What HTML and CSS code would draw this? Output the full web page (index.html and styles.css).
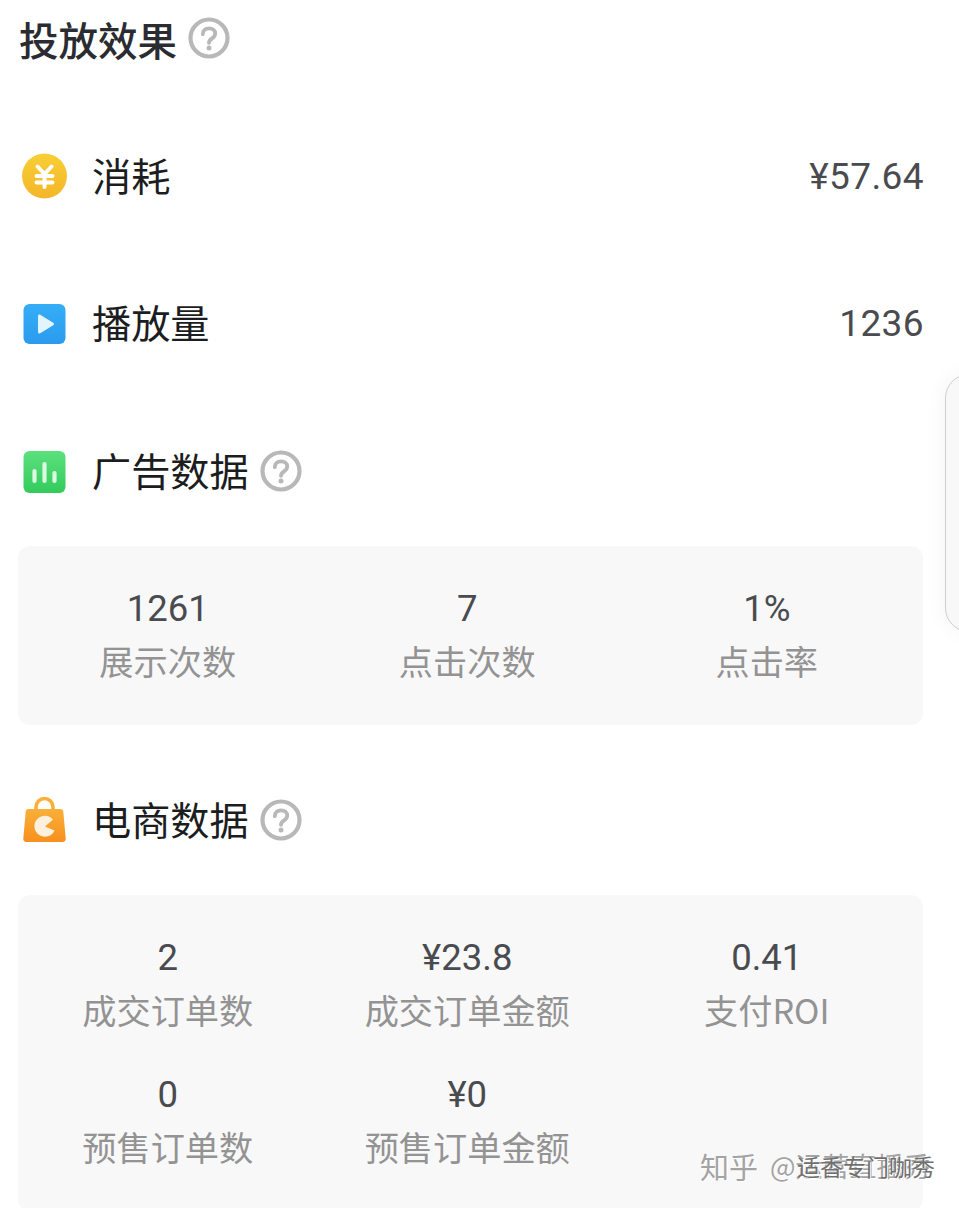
FILE: index.html
```html
<!DOCTYPE html>
<html lang="zh">
<head>
  <meta charset="utf-8">
  <title>投放效果</title>
  <link rel="stylesheet" href="styles.css">
</head>
<body>
  <svg class="defs" width="0" height="0">
    <defs>
      <linearGradient id="gradCoin" x1="0" y1="0" x2="0" y2="1"><stop offset="0" stop-color="#f7cf35"/><stop offset="1" stop-color="#f5b52a"/></linearGradient>
      <linearGradient id="gradPlay" x1="0" y1="0" x2="0" y2="1"><stop offset="0" stop-color="#35aef6"/><stop offset="1" stop-color="#2b9bee"/></linearGradient>
      <linearGradient id="gradBars" x1="0" y1="0" x2="0" y2="1"><stop offset="0" stop-color="#5ce07d"/><stop offset="1" stop-color="#33cb5c"/></linearGradient>
      <linearGradient id="gradBag" x1="0" y1="0" x2="0" y2="1"><stop offset="0" stop-color="#f9b03a"/><stop offset="1" stop-color="#f78f1e"/></linearGradient>
      <symbol id="help" viewBox="0 0 42 42">
        <circle cx="21" cy="21" r="18.500" fill="none" stroke="#b8b8b8" stroke-width="4.200"/>
        <path d="M14.800 17.200c0-3.600 2.700-5.800 6.200-5.800s6.200 2.100 6.200 5.200c0 2.400-1.400 3.600-3.100 4.800-1.900 1.300-3.100 2.200-3.100 4.400" fill="none" stroke="#b8b8b8" stroke-width="3.800" stroke-linecap="round"/>
        <circle cx="21" cy="31" r="2.500" fill="#b8b8b8"/>
      </symbol>
    </defs>
  </svg>

  <div class="page">
    <h1 class="title">投放效果 <svg class="help"><use href="#help"/></svg></h1>

    <div class="row row-first">
      <svg class="icon" viewBox="0 0 46 46">
        <circle cx="23.500" cy="23" r="22.500" fill="url(#gradCoin)"/>
        <path d="M16.500 13.500 23.500 21l7-7.500M15.500 23h16M15.500 29.500h16M23.500 21v13" fill="none" stroke="#fff" stroke-width="4" stroke-linecap="round" stroke-linejoin="round"/>
      </svg>
      <span class="row-name">消耗</span>
      <span class="row-value">¥57.64</span>
    </div>

    <div class="row">
      <svg class="icon icon-square" viewBox="0 0 46 46">
        <rect x="1.500" y="2" width="42" height="40" rx="6" fill="url(#gradPlay)"/>
        <path d="M16 14c0-1.200 1.200-1.900 2.200-1.300l13 8c1 .6 1 2 0 2.600l-13 8c-1 .6-2.200-.1-2.200-1.300z" fill="#e3f4fd"/>
      </svg>
      <span class="row-name">播放量</span>
      <span class="row-value">1236</span>
    </div>

    <div class="row">
      <svg class="icon icon-square" viewBox="0 0 46 46">
        <rect x="1.500" y="1" width="42" height="42" rx="6" fill="url(#gradBars)"/>
        <g fill="none" stroke="#dcf8e3" stroke-width="4.200" stroke-linecap="round">
          <path d="M12.500 21v10"/><path d="M22.500 14v17"/><path d="M32.500 23v8"/>
        </g>
      </svg>
      <span class="row-name">广告数据</span>
      <svg class="help"><use href="#help"/></svg>
    </div>

    <div class="panel">
      <div class="cell"><div class="cell-value">1261</div><div class="cell-label">展示次数</div></div>
      <div class="cell"><div class="cell-value">7</div><div class="cell-label">点击次数</div></div>
      <div class="cell"><div class="cell-value">1%</div><div class="cell-label">点击率</div></div>
    </div>

    <div class="row row-shop">
      <svg class="icon icon-square" viewBox="0 0 46 50">
        <path d="M14 17v-5a8.500 8.500 0 0 1 17 0v5" fill="none" stroke="#f9b03a" stroke-width="3.600"/>
        <path d="M6.500 14h32c1.500 0 2.600 1 2.800 2.500l2.400 27c.2 2-1.200 3.500-3 3.500H4.300c-1.800 0-3.200-1.500-3-3.500l2.400-27C3.900 15 5 14 6.500 14z" fill="url(#gradBag)"/>
        <path d="M31 24.500a10.500 10.500 0 1 0 1.500 11L23 31.500z" fill="#fdf0dc"/>
      </svg>
      <span class="row-name">电商数据</span>
      <svg class="help"><use href="#help"/></svg>
    </div>

    <div class="panel panel-shop">
      <div class="cell"><div class="cell-value">2</div><div class="cell-label">成交订单数</div></div>
      <div class="cell"><div class="cell-value">¥23.8</div><div class="cell-label">成交订单金额</div></div>
      <div class="cell"><div class="cell-value">0.41</div><div class="cell-label">支付ROI</div></div>
      <div class="cell"><div class="cell-value">0</div><div class="cell-label">预售订单数</div></div>
      <div class="cell"><div class="cell-value">¥0</div><div class="cell-label">预售订单金额</div></div>
    </div>
  </div>

  <div class="drawer"></div>

  <div class="watermark">
    <span>知乎</span>
    <span class="mark-name">@运营直播秀<span class="mark-over">适香专门咖秀</span></span>
  </div>
</body>
</html>
```

FILE: styles.css
```css
html, body {
  margin: 0;
  height: 1208px;
  overflow: hidden;
  background: #fff;
}

body {
  position: relative;
  font-family: "Noto Sans CJK SC", "Noto Sans", sans-serif;
}

.defs {
  position: absolute;
}

.page {
  padding: 0 36px 0 18px;
}

.title {
  display: flex;
  align-items: center;
  gap: 12px;
  height: 76px;
  margin: 0 0 70px 1px;
  font-size: 39.500px;
  font-weight: 500;
  color: #2b2c31;
}

.title .help {
  margin-left: -1px;
}

.help {
  width: 42px;
  height: 42px;
  flex: none;
}

.row {
  display: flex;
  align-items: center;
  height: 60px;
  margin-bottom: 88px;
  padding-left: 3px;
  font-size: 39.200px;
  color: #1c1d21;
}

.row .help {
  margin-left: 11px;
}

.row-first {
  margin-bottom: 87px;
}

.row-shop {
  margin-bottom: 45px;
}

.icon {
  width: 46px;
  height: 46px;
  flex: none;
  margin-right: 26px;
}

.icon-square {
  position: relative;
  left: 1px;
  top: 2px;
}

.row-shop .icon {
  height: 50px;
  top: 0;
}

.row-name {
  line-height: 60px;
  margin-bottom: 5px;
  margin-left: -1px;
}

.row-value {
  margin-left: auto;
  margin-right: -1px;
  font-family: Roboto, sans-serif;
  font-size: 37px;
  letter-spacing: 0.4px;
  color: #4a4b4f;
}

.panel {
  display: grid;
  grid-template-columns: repeat(3, 299.500px);
  gap: 29px 0;
  padding: 35px 0 36px;
  margin-top: -43px;
  margin-bottom: 65px;
  border-radius: 12px;
  background: #f8f8f9;
}

.panel-shop {
  margin-top: 0;
  margin-bottom: 0;
}

.cell {
  text-align: center;
}

.cell-value {
  height: 54px;
  line-height: 56px;
  font-family: Roboto, sans-serif;
  font-size: 36.500px;
  color: #4a4b4f;
}

.cell-label {
  height: 54px;
  line-height: 50px;
  font-size: 34.200px;
  color: #939393;
}

.drawer {
  position: absolute;
  left: 945px;
  top: 374px;
  width: 40px;
  height: 256px;
  border: 1px solid #cfcfcf;
  border-radius: 24px 0 0 24px;
  background: #f8f8f8;
  box-shadow: 0 0 22px rgba(0, 0, 0, 0.05);
}

.watermark {
  position: absolute;
  left: 700px;
  top: 1146px;
  display: flex;
  gap: 12px;
  font-size: 29px;
  line-height: 40px;
  color: #a3a3a3;
  text-shadow: 1px 1px 0 #fff;
}

.mark-name {
  position: relative;
  white-space: nowrap;
  font-size: 27px;
}

.mark-over {
  position: absolute;
  left: 27px;
  top: 0;
  font-size: 23px;
  color: #6f6f6f;
}
```
